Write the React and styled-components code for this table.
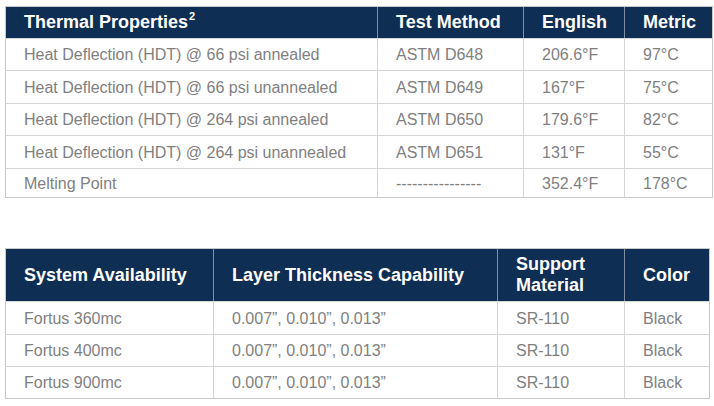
import React from "react";
import styled, { createGlobalStyle } from "styled-components";

const Global = createGlobalStyle`
  html, body { margin: 0; padding: 0; background: #ffffff; }
  body { font-family: "Liberation Sans", Arial, sans-serif; }
`;

const Page = styled.div`
  padding: 6px 0 0 5px;
  display: flex;
  flex-direction: column;
  gap: 50px;
`;

const Table = styled.div`
  width: ${(p) => p.$width}px;
  box-sizing: border-box;
  border: 1px solid #c9c9c9;
  border-top: none;
  display: flex;
  flex-direction: column;
`;

const Row = styled.div`
  display: grid;
  grid-template-columns: ${(p) => p.$cols};
  height: ${(p) => p.$h}px;
  box-sizing: border-box;
  border-top: 1px solid ${(p) => (p.$head ? "#c9c9c9" : "#d4d4d4")};
  background: ${(p) => (p.$head ? "#0f2e53" : "#ffffff")};
`;

const Cell = styled.div`
  display: flex;
  align-items: center;
  padding-left: 18px;
  box-sizing: border-box;
  border-left: ${(p) => (p.$first ? "none" : p.$head ? "1px solid #7f8fa3" : "1px solid #d4d4d4")};
  color: ${(p) => (p.$head ? "#ffffff" : "#7f7f7f")};
  font-size: ${(p) => (p.$head ? 18 : 16)}px;
  font-weight: ${(p) => (p.$head ? 700 : 400)};
  line-height: ${(p) => (p.$head ? "21px" : "18px")};
  white-space: nowrap;
  padding-top: ${(p) => (p.$head ? 0 : 1)}px;
`;

const Sup = styled.span`
  font-size: 11px;
  line-height: 0;
  position: relative;
  top: -7px;
  margin-left: 1px;
`;

const t1Cols = "371px 146px 101px 1fr";
const t2Cols = "207px 284px 127px 1fr";

const thermal = [
  ["Heat Deflection (HDT) @ 66 psi annealed", "ASTM D648", "206.6°F", "97°C", 32],
  ["Heat Deflection (HDT) @ 66 psi unannealed", "ASTM D649", "167°F", "75°C", 33],
  ["Heat Deflection (HDT) @ 264 psi annealed", "ASTM D650", "179.6°F", "82°C", 32],
  ["Heat Deflection (HDT) @ 264 psi unannealed", "ASTM D651", "131°F", "55°C", 33],
  ["Melting Point", "----------------", "352.4°F", "178°C", 29],
];

const systems = [
  ["Fortus 360mc", 33],
  ["Fortus 400mc", 32],
  ["Fortus 900mc", 32],
];

export default function App() {
  return (
    <>
      <Global />
      <Page>
        <Table $width={708}>
          <Row $head $cols={t1Cols} $h={32}>
            <Cell $head $first>
              Thermal Properties<Sup>2</Sup>
            </Cell>
            <Cell $head>Test Method</Cell>
            <Cell $head>English</Cell>
            <Cell $head>Metric</Cell>
          </Row>
          {thermal.map(([a, b, c, d, h]) => (
            <Row key={a} $cols={t1Cols} $h={h}>
              <Cell $first>{a}</Cell>
              <Cell>{b}</Cell>
              <Cell>{c}</Cell>
              <Cell>{d}</Cell>
            </Row>
          ))}
        </Table>
        <Table $width={705}>
          <Row $head $cols={t2Cols} $h={53}>
            <Cell $head $first>System Availability</Cell>
            <Cell $head>Layer Thickness Capability</Cell>
            <Cell $head>
              Support
              <br />
              Material
            </Cell>
            <Cell $head>Color</Cell>
          </Row>
          {systems.map(([name, h]) => (
            <Row key={name} $cols={t2Cols} $h={h}>
              <Cell $first>{name}</Cell>
              <Cell>0.007”, 0.010”, 0.013”</Cell>
              <Cell>SR-110</Cell>
              <Cell>Black</Cell>
            </Row>
          ))}
        </Table>
      </Page>
    </>
  );
}
